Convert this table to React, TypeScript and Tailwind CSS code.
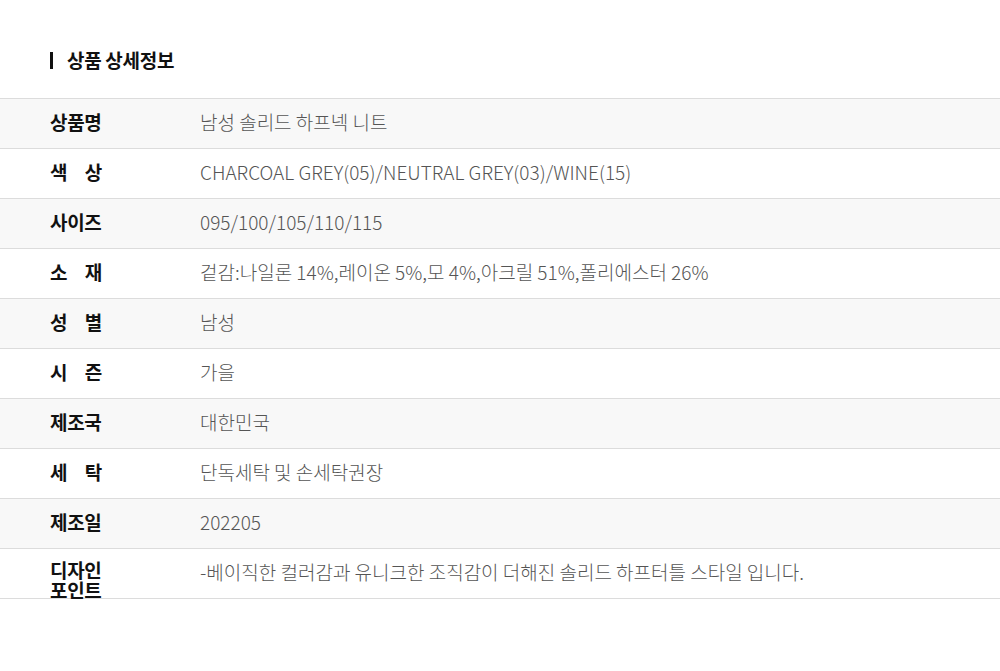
import React from "react";

const rows: { label: string[]; value: string }[] = [
  { label: ["상품명"], value: "남성 솔리드 하프넥 니트" },
  { label: ["색", "상"], value: "CHARCOAL GREY(05)/NEUTRAL GREY(03)/WINE(15)" },
  { label: ["사이즈"], value: "095/100/105/110/115" },
  { label: ["소", "재"], value: "겉감:나일론 14%,레이온 5%,모 4%,아크릴 51%,폴리에스터 26%" },
  { label: ["성", "별"], value: "남성" },
  { label: ["시", "즌"], value: "가을" },
  { label: ["제조국"], value: "대한민국" },
  { label: ["세", "탁"], value: "단독세탁 및 손세탁권장" },
  { label: ["제조일"], value: "202205" },
  { label: ["디자인", "포인트"], value: "-베이직한 컬러감과 유니크한 조직감이 더해진 솔리드 하프터틀 스타일 입니다." },
];

const Label = ({ parts }: { parts: string[] }) => {
  if (parts.length === 1) return <span>{parts[0]}</span>;
  if (parts[0].length === 1)
    return (
      <span className="flex w-[52px] justify-between">
        <span>{parts[0]}</span>
        <span>{parts[1]}</span>
      </span>
    );
  return (
    <span className="flex flex-col leading-5">
      <span>{parts[0]}</span>
      <span>{parts[1]}</span>
    </span>
  );
};

export default function App() {
  return (
    <div
      className="min-h-[671px] w-[1000px] bg-white pt-[50px]"
      style={{ fontFamily: '"Noto Sans CJK KR", "Noto Sans", sans-serif' }}
    >
      <div className="flex items-center gap-[14px] px-[50px]">
        <div className="h-[17px] w-[3px] bg-[#111]" />
        <h2 className="text-[19px] font-bold leading-5 tracking-[-0.3px] text-[#111]">상품 상세정보</h2>
      </div>

      <div className="mt-[28px] border-t border-[#dcdcdc]">
        {rows.map((row, i) => (
          <div
            key={i}
            className={`flex h-[50px] border-b border-[#dcdcdc] ${i % 2 === 0 ? "bg-[#f8f8f8]" : "bg-white"}`}
          >
            <div
              className={`w-[200px] shrink-0 pl-[50px] text-[19px] font-bold tracking-[-0.3px] text-[#111] ${
                row.label.length === 2 && row.label[0].length > 1 ? "pt-[11px]" : "pt-[11px] leading-6"
              }`}
            >
              <Label parts={row.label} />
            </div>
            <div className="pt-[11px] text-[19px] font-light leading-6 text-[#555]">{row.value}</div>
          </div>
        ))}
      </div>
    </div>
  );
}
